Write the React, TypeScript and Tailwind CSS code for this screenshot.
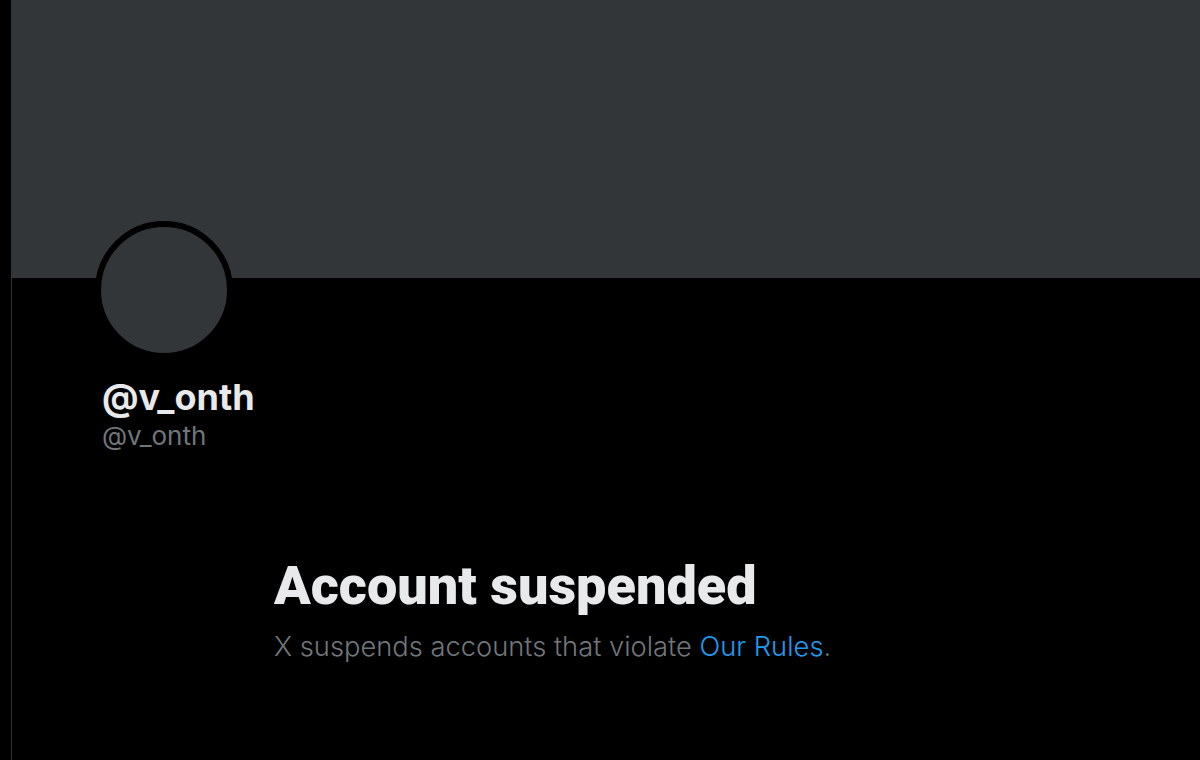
export default function App() {
  return (
    <div className="flex h-[760px] w-[1200px] overflow-hidden bg-black" style={{ fontFamily: 'Inter, "Noto Sans", sans-serif' }}>
      <div className="w-[12px] shrink-0 border-r border-[#2f3336] bg-black" />
      <div className="flex flex-1 flex-col">
        <div className="h-[278px] shrink-0 bg-[#333639]" />
        <div className="ml-[83px] -mt-[57px] h-[138px] w-[138px] rounded-full border-[6px] border-black bg-[#333639]" />
        <div className="ml-[90px] mt-[16px] flex flex-col">
          <div className="text-[36px] font-bold leading-[44px] text-[#e7e9ea]">@v_onth</div>
          <div className="text-[26px] leading-[34px] text-[#71767b]">@v_onth</div>
        </div>
        <div className="ml-[262px] mt-[102px] flex flex-col">
          <div className="font-['Roboto'] text-[54px] font-black leading-[62px] text-[#e7e9ea]">Account suspended</div>
          <div className="mt-[13px] text-[27.3px] font-light leading-[34px] text-[#71767b]">
            X suspends accounts that violate <span className="text-[#1d9bf0]">Our Rules</span>.
          </div>
        </div>
      </div>
    </div>
  );
}
